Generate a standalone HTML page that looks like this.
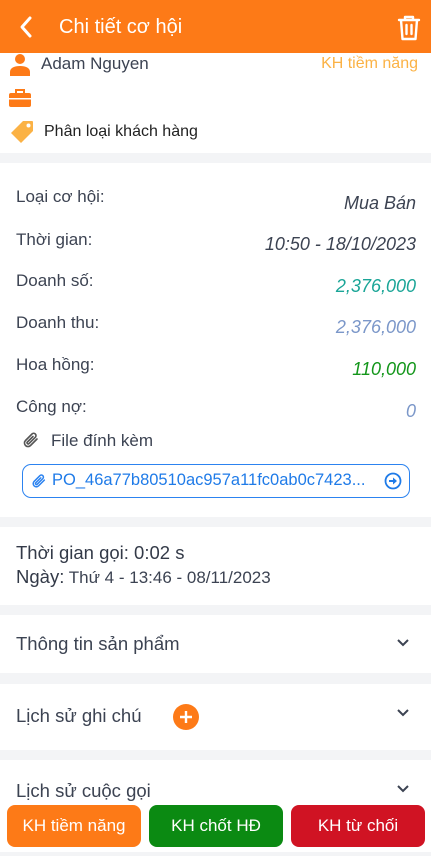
<!DOCTYPE html>
<html><head><meta charset="utf-8"><style>
*{margin:0;padding:0;box-sizing:border-box}
body{width:431px;height:856px;overflow:hidden;background:#fff;font-family:"Liberation Sans",sans-serif;color:#3c4352;position:relative}
.a{position:absolute}
.sep{position:absolute;left:0;width:431px;background:#f3f4f6}
.lbl{position:absolute;left:16px;font-size:17px;color:#3c4352}
.val{position:absolute;right:15px;font-size:18px;font-style:italic}
.sec{position:absolute;left:16px;font-size:18.5px;color:#3c4352}
.chev{position:absolute;left:396px}
.btn{position:absolute;top:805px;height:42px;width:134px;border-radius:8px;color:#fff;font-size:17px;text-align:center;line-height:42px}
</style></head><body>
<div class="a" style="left:0;top:0;width:431px;height:53px;background:#fd7a17"></div>
<svg class="a" style="left:18px;top:15px" width="16" height="24" viewBox="0 0 16 24"><path d="M12 3L4 12l8 9" stroke="#fff" stroke-width="3" fill="none" stroke-linecap="round" stroke-linejoin="round"/></svg>
<div class="a" style="left:59px;top:16px;font-size:20px;color:#fff">Chi tiết cơ hội</div>
<svg class="a" style="left:397px;top:15px" width="24" height="27" viewBox="0 0 24 27"><path d="M2 5h20M8 5V2h8v3M4 5l1.5 19h13L20 5M9.5 10v9M14.5 10v9" stroke="#fff" stroke-width="2.4" fill="none" stroke-linejoin="round" stroke-linecap="round"/></svg>
<svg class="a" style="left:9px;top:54px" width="22" height="22" viewBox="0 0 22 22"><circle cx="11" cy="5" r="5" fill="#fd7a17"/><path d="M1 22v-4c0-4 4-6 10-6s10 2 10 6v4z" fill="#fd7a17"/></svg>
<div class="a" style="left:41px;top:54px;font-size:17px;color:#3c4352">Adam Nguyen</div>
<div class="a" style="right:13px;top:55px;font-size:16px;color:#fbb245">KH tiềm năng</div>
<svg class="a" style="left:9px;top:89px" width="22" height="18" viewBox="0 0 22 18"><path d="M7 4V1h8v3" stroke="#fd7a17" stroke-width="2" fill="none"/><rect x="0" y="4" width="22" height="14" rx="2" fill="#fd7a17"/><rect x="0" y="9" width="22" height="1.5" fill="#fff"/></svg>
<svg class="a" style="left:9px;top:119px" width="26" height="26" viewBox="0 0 26 26"><path d="M14 2h9a1 1 0 011 1v9L12 24 2 14z" fill="#fbb245" stroke-linejoin="round"/><circle cx="19.5" cy="6.5" r="2" fill="#fff"/></svg>
<div class="a" style="left:44px;top:123px;font-size:16px;color:#222">Phân loại khách hàng</div>
<div class="sep" style="top:153px;height:10px"></div>
<div class="lbl" style="top:187px">Loại cơ hội:</div><div class="val" style="top:193px;color:#3c4352">Mua Bán</div>
<div class="lbl" style="top:230px">Thời gian:</div><div class="val" style="top:234px;color:#3c4352">10:50 - 18/10/2023</div>
<div class="lbl" style="top:271px">Doanh số:</div><div class="val" style="top:276px;color:#1aa597">2,376,000</div>
<div class="lbl" style="top:313px">Doanh thu:</div><div class="val" style="top:317px;color:#7b97c9">2,376,000</div>
<div class="lbl" style="top:355px">Hoa hồng:</div><div class="val" style="top:359px;color:#13961a">110,000</div>
<div class="lbl" style="top:397px">Công nợ:</div><div class="val" style="top:401px;color:#7b97c9">0</div>
<svg class="a" style="left:22px;top:431px" width="18" height="18" viewBox="0 0 18 18"><path d="M15 8l-6.5 6.5a3.5 3.5 0 01-5-5L10 3a2.3 2.3 0 013.3 3.3L7 12.6a1.1 1.1 0 01-1.6-1.6L11 5.5" stroke="#555" stroke-width="1.6" fill="none" stroke-linecap="round"/></svg>
<div class="a" style="left:51px;top:431px;font-size:17px;color:#3c4352">File đính kèm</div>
<div class="a" style="left:22px;top:464px;width:388px;height:34px;border:1.5px solid #2c83f0;border-radius:9px"></div>
<svg class="a" style="left:31px;top:473px" width="16" height="16" viewBox="0 0 18 18"><path d="M15 8l-6.5 6.5a3.5 3.5 0 01-5-5L10 3a2.3 2.3 0 013.3 3.3L7 12.6a1.1 1.1 0 01-1.6-1.6L11 5.5" stroke="#2c83f0" stroke-width="1.7" fill="none" stroke-linecap="round"/></svg>
<div class="a" style="left:52px;top:471px;font-size:16.5px;color:#1f7be8">PO_46a77b80510ac957a11fc0ab0c7423...</div>
<svg class="a" style="left:384px;top:472px" width="18" height="18" viewBox="0 0 18 18"><circle cx="9" cy="9" r="7.5" stroke="#1f7be8" stroke-width="1.8" fill="none"/><path d="M5 8h4V5.5L13 9l-4 3.5V10H5z" fill="#1f7be8"/></svg>
<div class="sep" style="top:517px;height:10px"></div>
<div class="a" style="left:16px;top:542px;font-size:18.5px;color:#333a48">Thời gian gọi: 0:02 s</div>
<div class="a" style="left:16px;top:566px;font-size:17px;color:#3c4352"><span style="font-size:18.5px;color:#333a48">Ngày:</span> Thứ 4 - 13:46 - 08/11/2023</div>
<div class="sep" style="top:605px;height:10px"></div>
<div class="sec" style="top:633px">Thông tin sản phẩm</div>
<svg class="chev" style="top:638px" width="14" height="10" viewBox="0 0 14 10"><path d="M2 2l5 5 5-5" stroke="#3c4352" stroke-width="2" fill="none"/></svg>
<div class="sep" style="top:673px;height:11px"></div>
<div class="sec" style="top:705px">Lịch sử ghi chú</div>
<div class="a" style="left:173px;top:704px;width:26px;height:26px;border-radius:50%;background:#fd7a17"></div>
<svg class="a" style="left:179px;top:710px" width="14" height="14" viewBox="0 0 14 14"><path d="M7 1v12M1 7h12" stroke="#fff" stroke-width="2.4"/></svg>
<svg class="chev" style="top:708px" width="14" height="10" viewBox="0 0 14 10"><path d="M2 2l5 5 5-5" stroke="#3c4352" stroke-width="2" fill="none"/></svg>
<div class="sep" style="top:750px;height:10px"></div>
<div class="sec" style="top:780px">Lịch sử cuộc gọi</div>
<svg class="chev" style="top:784px" width="14" height="10" viewBox="0 0 14 10"><path d="M2 2l5 5 5-5" stroke="#3c4352" stroke-width="2" fill="none"/></svg>
<div class="btn" style="left:7px;background:#fd7a17">KH tiềm năng</div>
<div class="btn" style="left:149px;background:#0b8a12">KH chốt HĐ</div>
<div class="btn" style="left:291px;background:#d01323">KH từ chối</div>
<div class="sep" style="top:852px;height:4px"></div>
</body></html>
